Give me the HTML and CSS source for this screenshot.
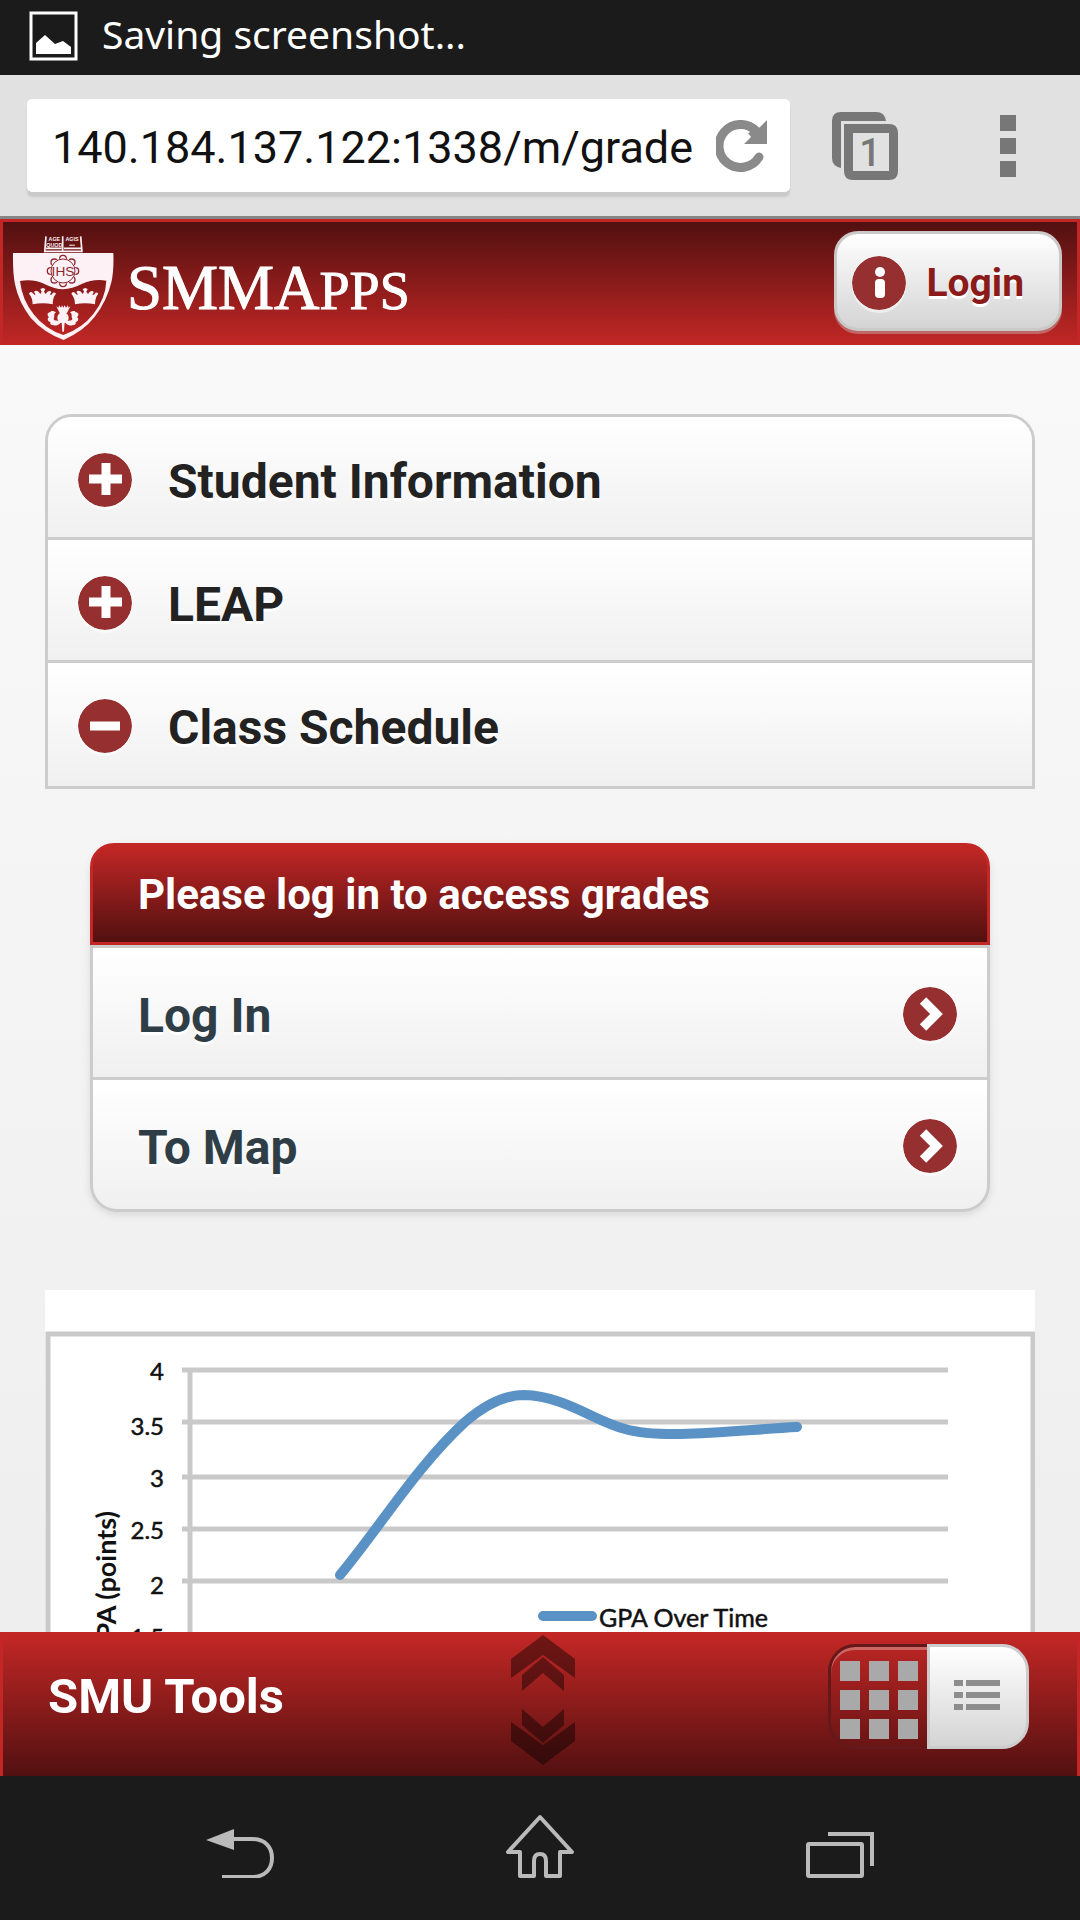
FILE: index.html
```html
<!DOCTYPE html>
<html lang="en">
<head>
<meta charset="utf-8">
<meta name="viewport" content="width=device-width">
<title>SMMApps</title>
<link rel="stylesheet" href="styles.css">
</head>
<body>
<div class="status-bar">
  <svg class="status-icon" viewBox="0 0 50 50" aria-hidden="true"><rect x="3" y="2" width="45" height="46" fill="none" stroke="#fff" stroke-width="3"/><path d="M8 43V32l9-8 10 9 8-3 8 6v7z" fill="#fff"/></svg>
  <span class="status-text">Saving screenshot...</span>
</div>

<div class="browser-bar">
  <div class="url-box">
    <input class="url-input" type="text" aria-label="Address" value="140.184.137.122:1338/m/grade">
    <button class="plain" aria-label="Reload"><svg class="reload-icon" viewBox="0 0 52 52"><path d="M40 11A21.500 21.500 0 1 0 43 37" fill="none" stroke="#8a8a8a" stroke-width="9" stroke-linecap="round"/><path d="M51 0V24H28L35 17L32 13L42 9Z" fill="#8a8a8a"/></svg></button>
  </div>
  <button class="plain tabs" aria-label="Open tabs"><svg class="tabs-icon" viewBox="0 0 66 68"><path d="M9 56Q0 54 0 46V9Q0 0 9 0H44Q53 0 54 9H9Z" fill="#777"/><path fill-rule="evenodd" d="M12 12H57Q66 12 66 21V59Q66 68 57 68H21Q12 68 12 59ZM21 21V59H57V21Z" fill="#777"/><text x="38" y="54" text-anchor="middle" class="tab-count">1</text></svg></button>
  <button class="plain" aria-label="Menu"><svg class="menu-icon" viewBox="0 0 16 62"><path d="M0 0h16v16H0zM0 23h16v16H0zM0 46h16v16H0z" fill="#777"/></svg></button>
</div>

<header class="app-header">
  <a class="brand" href="#">
    <svg class="crest" viewBox="37 32 309 321" aria-hidden="true">
      <defs><linearGradient id="field" x1="0" y1="0" x2="0" y2="1"><stop offset="0" stop-color="#871a19"/><stop offset="1" stop-color="#bb2423"/></linearGradient></defs>
      <path d="M139 36L135 84M243 36L247 84M189 36V84M139 72H186M193 72H244M136 81H246" stroke="#fdf1f6" stroke-width="5" fill="none"/>
      <g class="motto"><text x="164" y="50">AGE</text><text x="164" y="67">QUOD</text><text x="217" y="50">AGIS</text><text x="217" y="67">•••</text></g>
      <path d="M40 86H341Q343 140 335 174Q322 230 284 279Q252 320 192 347Q130 323 93 280Q57 234 46 180Q39 145 40 86Z" fill="#fdf1f6"/>
      <path d="M61 170Q103 163 136 180Q166 195 190 195Q218 194 246 179Q281 163 320 169Q318 223 281 269Q248 312 191 332Q137 314 103 271Q67 227 61 170Z" fill="url(#field)"/>
      <g fill="none" stroke="#8c2730" stroke-width="4"><circle cx="190" cy="140" r="34"/><circle cx="190" cy="103" r="10"/><circle cx="190" cy="177" r="10"/><circle cx="153" cy="140" r="10"/><circle cx="227" cy="140" r="10"/><circle cx="164" cy="114" r="10"/><circle cx="216" cy="114" r="10"/><circle cx="164" cy="166" r="10"/><circle cx="216" cy="166" r="10"/></g>
      <circle cx="190" cy="140" r="38" fill="#fdf1f6"/>
      <circle cx="190" cy="140" r="36" fill="none" stroke="#8c2730" stroke-width="3"/>
      <text x="190" y="154" class="ihs">IHS</text>
      <g fill="#fdf1f6">
        <path id="crown" d="M88 208Q93 198 102 209Q104 213 108 210Q99 201 108 199Q117 199 122 209L126 202L122 194L130 191L137 194L133 202L138 209Q143 199 151 200Q159 202 151 210Q155 214 158 208Q163 201 169 208Q159 219 159 240Q130 234 99 240Q99 221 88 208Z"/>
        <use href="#crown" x="127"/>
        <path d="M180 266L170 246L177 250L178 243L184 250L187 243L191 250L195 243L199 250L205 243L206 250L212 246L202 266Z"/>
        <circle cx="190" cy="280" r="17"/>
        <path d="M184 294C179 301 171 307 160 302C154 304 150 298 152 293C143 291 142 282 148 278C140 272 144 264 152 264C153 257 164 260 169 264C160 270 167 277 162 283C164 293 174 284 184 294ZM196 294C201 301 209 307 220 302C226 304 230 298 228 293C237 291 238 282 232 278C240 272 236 264 228 264C227 257 216 260 211 264C220 270 213 277 218 283C216 293 206 284 196 294ZM186 292H195L193 322H188Z"/>
      </g>
    </svg>
    <span class="wordmark">SMMA<span class="small-cap">PPS</span></span>
  </a>
  <button class="login"><svg class="icon" viewBox="0 0 54 54" aria-hidden="true"><circle cx="27" cy="27" r="27" fill="#962f2f"/><circle cx="28" cy="16" r="5" fill="#fff"/><rect x="23" y="23" width="10" height="19" rx="4" fill="#fff"/></svg>Login</button>
</header>

<main class="content">
  <section class="accordion">
    <button class="fold" aria-expanded="false"><svg class="icon" viewBox="0 0 54 54" aria-hidden="true"><circle cx="27" cy="27" r="27" fill="#962f2f"/><path d="M11 26H44M28 10V42" stroke="#fff" stroke-width="9"/></svg><span class="fold-label">Student Information</span></button>
    <button class="fold" aria-expanded="false"><svg class="icon" viewBox="0 0 54 54" aria-hidden="true"><circle cx="27" cy="27" r="27" fill="#962f2f"/><path d="M11 26H44M28 10V42" stroke="#fff" stroke-width="9"/></svg><span class="fold-label">LEAP</span></button>
    <button class="fold" aria-expanded="true"><svg class="icon" viewBox="0 0 54 54" aria-hidden="true"><circle cx="27" cy="27" r="27" fill="#962f2f"/><path d="M12 27H42" stroke="#fff" stroke-width="9"/></svg><span class="fold-label">Class Schedule</span></button>
  </section>

  <section class="panel">
    <h2 class="panel-title">Please log in to access grades</h2>
    <a class="row" href="#"><span class="row-label">Log In</span><svg class="icon" viewBox="0 0 54 54" aria-hidden="true"><circle cx="27" cy="27" r="27" fill="#962f2f"/><path d="M20 13.500L33.500 27L20 40.500" fill="none" stroke="#fff" stroke-width="9"/></svg></a>
    <a class="row" href="#"><span class="row-label">To Map</span><svg class="icon" viewBox="0 0 54 54" aria-hidden="true"><circle cx="27" cy="27" r="27" fill="#962f2f"/><path d="M20 13.500L33.500 27L20 40.500" fill="none" stroke="#fff" stroke-width="9"/></svg></a>
  </section>

  <svg class="chart" viewBox="0 0 990 400" role="img" aria-label="GPA Over Time">
    <rect width="990" height="400" fill="#fff"/>
    <path d="M3 400V44H988V400" fill="none" stroke="#c9c9c9" stroke-width="5"/>
    <path d="M137 80H903M137 132H903M137 187H903M137 239H903M137 291H903M145 80V400" fill="none" stroke="#c9c9c9" stroke-width="5"/>
    <path d="M295 285C335 237 372 176 420 132C448 108 468 105 479 105C520 106 549 131 580 139C618 150 693 140 752 137M498 326H547" fill="none" stroke="#5b92c5" stroke-width="10" stroke-linecap="round"/>
    <g class="ticks"><text x="119" y="90">4</text><text x="119" y="145">3.5</text><text x="119" y="197">3</text><text x="119" y="249">2.5</text><text x="119" y="304">2</text><text x="119" y="356">1.5</text></g>
    <text x="554" y="337" class="legend">GPA Over Time</text>
    <text transform="translate(71 221) rotate(-90)" class="axis-title">GPA (points)</text>
  </svg>
</main>

<footer class="toolbar">
  <h2 class="toolbar-title">SMU Tools</h2>
  <svg class="grip" viewBox="0 0 64 130" aria-hidden="true"><g fill="#000" fill-opacity=".42"><path id="up" d="M0 24L32 0L64 24V43L32 20L0 43ZM11 40L32 22L53 40V56L32 38L11 56Z"/><use href="#up" transform="matrix(1 0 0 -1 0 130)"/></g></svg>
  <div class="view-toggle">
    <button class="view grid-view" aria-label="Grid view"><svg class="grid-icon" viewBox="0 0 78 78"><path d="M0 0h20v20H0zM29 0h20v20H29zM58 0h20v20H58zM0 29h20v20H0zM29 29h20v20H29zM58 29h20v20H58zM0 58h20v20H0zM29 58h20v20H29zM58 58h20v20H58z" fill="#a9a9a9"/></svg></button>
    <button class="view list-view" aria-label="List view"><svg class="list-icon" viewBox="0 0 46 30"><path d="M0 0h9v6H0zM12 0h34v6H12zM0 12h9v6H0zM12 12h34v6H12zM0 24h9v6H0zM12 24h34v6H12z" fill="#8d8d8d"/></svg></button>
  </div>
</footer>

<nav class="system-nav" aria-label="System">
  <button class="plain" aria-label="Back"><svg class="nav-icon" viewBox="0 0 70 66"><path d="M1 28L29 17V38Z" fill="#bababa"/><path d="M28 27H47C60 27 67 35 67 46S60 65 47 65H17" fill="none" stroke="#bababa" stroke-width="4"/></svg></button>
  <button class="plain" aria-label="Home"><svg class="nav-icon" viewBox="0 0 70 66"><path d="M35 5L3 40H15V64H29V49Q29 42 35 42T41 49V64H55V40H67Z" fill="none" stroke="#bababa" stroke-width="4" stroke-linejoin="round"/></svg></button>
  <button class="plain" aria-label="Recent apps"><svg class="nav-icon" viewBox="0 0 70 66"><rect x="3" y="32" width="54" height="32" rx="1" fill="none" stroke="#bababa" stroke-width="4"/><path d="M23 22H67V54" fill="none" stroke="#bababa" stroke-width="4"/></svg></button>
</nav>
</body>
</html>
```
FILE: styles.css
```css
* {
  box-sizing: border-box;
}

body {
  margin: 0;
  height: 100vh;
  display: flex;
  flex-direction: column;
  overflow: hidden;
  background: #f0f0f0;
  font-family: Roboto, "Liberation Sans", sans-serif;
}

svg {
  display: block;
  flex: none;
}

button {
  font: inherit;
  cursor: pointer;
}

.plain {
  padding: 0;
  border: 0;
  background: none;
}

.icon {
  width: 54px;
  height: 54px;
  border-radius: 50%;
  box-shadow: 0 3px 0 rgba(255, 255, 255, .5);
}

.status-bar {
  flex: none;
  height: 75px;
  padding: 0 28px 3px;
  display: flex;
  align-items: center;
  gap: 24px;
  background: #1b1b1b;
  color: #fff;
  font: 39px "Noto Sans", sans-serif;
}

.status-icon {
  width: 50px;
  height: 50px;
}

.status-text {
  padding-bottom: 6px;
}

.browser-bar {
  flex: none;
  height: 144px;
  padding: 0 64px 0 27px;
  display: flex;
  align-items: center;
  background: #e1e1e1;
  border-bottom: 3px solid #868686;
}

.url-box {
  flex: 1;
  height: 93px;
  padding: 0 22px 0 25px;
  display: flex;
  align-items: center;
  background: #fff;
  border-radius: 5px;
  box-shadow: 0 5px 2px rgba(0, 0, 0, .1);
}

.url-input {
  flex: 1;
  min-width: 0;
  padding: 3px 0 0;
  border: 0;
  background: none;
  color: #111;
  font: 45px Roboto, sans-serif;
}

.reload-icon {
  width: 52px;
  height: 52px;
}

.tabs {
  margin-left: 42px;
  margin-right: 102px;
}

.tabs-icon {
  width: 66px;
  height: 68px;
}

.tab-count {
  font: 500 38px Roboto, sans-serif;
  fill: #777;
}

.menu-icon {
  width: 16px;
  height: 62px;
}

.app-header {
  flex: none;
  height: 126px;
  padding: 9px 15px 0 9px;
  display: flex;
  align-items: flex-start;
  justify-content: space-between;
  border: 3px solid #c22725;
  border-bottom: 0;
  background: linear-gradient(#521010, #c22725);
}

.brand {
  padding-top: 4px;
  display: flex;
  align-items: center;
  gap: 12px;
  color: #fff;
  text-decoration: none;
}

.crest {
  width: 103px;
  height: 107px;
}

.motto {
  font: bold 16px "Liberation Sans", sans-serif;
  fill: #fdf1f6;
  text-anchor: middle;
}

.ihs {
  font: 41px "Liberation Sans", sans-serif;
  fill: #8c2730;
  text-anchor: middle;
}

.wordmark {
  padding-top: 3px;
  font: 63px/63px "Liberation Serif", serif;
  -webkit-text-stroke: 1px #fff;
}

.small-cap {
  font-size: 54px;
}

.login {
  height: 100px;
  padding: 3px 35px 0 15px;
  display: flex;
  align-items: center;
  gap: 20px;
  border: 3px solid #cbc8c8;
  border-radius: 24px;
  background: linear-gradient(#fff, #d4d4d4);
  box-shadow: 0 3px 0 rgba(204, 204, 204, .4);
  color: #8b1a1a;
  font-size: 39px;
  font-weight: 700;
  text-shadow: 0 3px 0 #fff;
}

.content {
  flex: 1;
  min-height: 0;
  padding: 69px 45px 0;
  overflow: hidden;
  background: linear-gradient(#f9f9f9, #eee);
}

.accordion {
  border: 3px solid #ccc;
  border-radius: 27px 27px 0 0;
  overflow: hidden;
}

.fold {
  width: 100%;
  height: 123px;
  padding: 6px 30px 0;
  display: flex;
  align-items: center;
  gap: 36px;
  border: 0;
  border-bottom: 3px solid #ccc;
  background: linear-gradient(#fff, #f0f0f0);
  color: #222;
  font-size: 48px;
  font-weight: 700;
  text-shadow: 0 3px 0 #fff;
}

.fold:last-child {
  padding-top: 3px;
  border-bottom: 0;
}

.fold-label,
.row-label {
  padding-top: 2px;
}

.panel {
  margin: 54px 45px 78px;
  border-radius: 27px;
  box-shadow: 0 3px 9px rgba(0, 0, 0, .1);
}

.panel-title {
  height: 102px;
  margin: 0;
  padding: 0 45px;
  display: flex;
  align-items: center;
  border: 3px solid #c22725;
  border-radius: 24px 24px 0 0;
  background: linear-gradient(#c22725, #521010);
  color: #fff;
  font-size: 42px;
}

.row {
  height: 132px;
  padding: 3px 30px 0 45px;
  display: flex;
  align-items: center;
  justify-content: space-between;
  border: 3px solid #ccc;
  border-bottom: 0;
  background: linear-gradient(#fff, #f0f0f0);
  color: #2f3e46;
  font-size: 48px;
  font-weight: 700;
  text-decoration: none;
  text-shadow: 0 3px 0 #fff;
}

.row:last-child {
  height: 135px;
  border-bottom: 3px solid #ccc;
  border-radius: 0 0 27px 27px;
}

.chart {
  width: 100%;
}

.ticks,
.legend {
  font: 24px Lato, sans-serif;
  fill: #111;
  stroke: #111;
  stroke-width: .5px;
}

.legend {
  font-size: 25px;
}

.ticks,
.axis-title {
  text-anchor: end;
}

.axis-title {
  font: bold 27px Lato, sans-serif;
  fill: #111;
}

.toolbar {
  flex: none;
  height: 144px;
  padding: 9px 48px 0 45px;
  display: grid;
  grid-template-columns: 1fr auto 1fr;
  align-items: start;
  border: 3px solid #c22725;
  border-bottom: 0;
  background: linear-gradient(#c22725, #521010);
}

.toolbar-title {
  margin: 0;
  color: #fff;
  font-size: 49px;
  line-height: 105px;
}

.grip {
  width: 64px;
  height: 130px;
  margin: -9px 0 0 9px;
}

.view-toggle {
  justify-self: end;
  display: flex;
}

.view {
  height: 105px;
  padding: 0;
  display: flex;
  align-items: center;
  justify-content: center;
}

.grid-view {
  width: 99px;
  padding-top: 6px;
  border: 3px solid #65181a;
  border-right: 0;
  border-radius: 27px 0 0 27px;
  background: none;
  box-shadow: inset 0 3px 0 rgba(255, 255, 255, .3);
}

.list-view {
  width: 102px;
  padding-right: 3px;
  padding-bottom: 3px;
  border: 3px solid #ccc;
  border-radius: 0 27px 27px 0;
  background: linear-gradient(#fff, #d4d4d4);
}

.grid-icon {
  width: 78px;
  height: 78px;
}

.list-icon {
  width: 46px;
  height: 30px;
}

.system-nav {
  flex: none;
  height: 144px;
  padding: 0 205px 6px;
  display: flex;
  align-items: center;
  justify-content: space-between;
  background: #1b1b1b;
}

.nav-icon {
  width: 70px;
  height: 66px;
}
```
